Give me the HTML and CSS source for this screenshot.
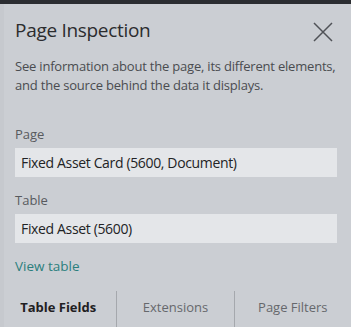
FILE: index.html
```html
<!DOCTYPE html>
<html lang="en">
<head>
    <meta charset="UTF-8">
    <meta name="viewport" content="width=device-width, initial-scale=1.0">
    <title>Page Inspection</title>
    <link rel="stylesheet" href="styles.css">
</head>
<body>
    <div class="topbar"></div>
    <div class="panel">
        <div class="header">
            <h1>Page Inspection</h1>
            <button class="close" aria-label="Close">
                <svg width="20" height="20" viewBox="0 0 20 20">
                    <path d="M1 1 L19 19 M19 1 L1 19" stroke="#505257" stroke-width="1.5" fill="none"/>
                </svg>
            </button>
        </div>
        <p class="intro">See information about the page, its different elements, and the source behind the data it displays.</p>

        <div class="field first">
            <label>Page</label>
            <div class="value">Fixed Asset Card (5600, Document)</div>
        </div>

        <div class="field">
            <label>Table</label>
            <div class="value">Fixed Asset (5600)</div>
        </div>

        <a href="#" class="link">View table</a>

        <div class="tabs">
            <div class="tab active">Table Fields</div>
            <div class="tab">Extensions</div>
            <div class="tab">Page Filters</div>
        </div>
    </div>
</body>
</html>
```

FILE: styles.css
```css
body {
    margin: 0;
    background: #cbced3;
    font-family: "Open Sans", "Noto Sans", sans-serif;
    color: #2b2c2e;
    overflow: hidden;
}
.topbar {
    height: 4px;
    background: #2b2d31;
}
.panel {
    padding: 0 14px 0 11px;
    border-left: 4px solid #c6c9ce;
}
.header {
    display: flex;
    justify-content: space-between;
    align-items: flex-start;
    box-sizing: border-box;
    height: 53px;
    padding-top: 13px;
}
h1 {
    margin: 0;
    font-size: 19px;
    line-height: 26px;
    font-weight: 400;
    letter-spacing: -0.3px;
    color: #2b2c2e;
}
.close {
    background: none;
    border: none;
    padding: 0;
    margin: 5px 4px 0 0;
    width: 20px;
    height: 20px;
}
.close svg {
    display: block;
}
.intro {
    margin: 0;
    font-size: 13px;
    line-height: 19px;
    letter-spacing: -0.2px;
    color: #4a4c50;
}
.field {
    margin-top: 13px;
}
.field.first {
    margin-top: 29px;
}
label {
    display: block;
    font-size: 13px;
    line-height: 20px;
    color: #585a5e;
    margin-bottom: 4px;
}
.value {
    background: #e4e6e9;
    height: 29px;
    line-height: 29px;
    padding: 0 6px;
    font-size: 14px;
    letter-spacing: -0.35px;
    color: #222325;
}
.link {
    display: block;
    margin-top: 13px;
    font-size: 13.5px;
    line-height: 20px;
    color: #2b7f7d;
    text-decoration: none;
}
.tabs {
    display: flex;
    margin-top: 15px;
    height: 40px;
    margin-left: -15px;
    margin-right: -14px;
}
.tab {
    flex: 1;
    text-align: center;
    font-size: 13px;
    line-height: 33px;
    color: #66686c;
    border-left: 1px solid #a5a8ad;
}
.tab:first-child {
    border-left: none;
}
.tab.active {
    font-weight: 700;
    color: #1f2022;
}
```
